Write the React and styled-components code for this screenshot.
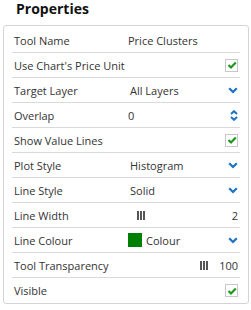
import React from 'react';
import styled, { createGlobalStyle } from 'styled-components';

const GlobalStyle = createGlobalStyle`
  body {
    margin: 0;
    background: #ffffff;
    font-family: "Open Sans", "Liberation Sans", sans-serif;
  }
`;

const rows = [
  { label: 'Tool Name', kind: 'text', value: 'Price Clusters' },
  { label: "Use Chart's Price Unit", kind: 'check' },
  { label: 'Target Layer', kind: 'select', value: 'All Layers' },
  { label: 'Overlap', kind: 'number', value: '0' },
  { label: 'Show Value Lines', kind: 'check' },
  { label: 'Plot Style', kind: 'select', value: 'Histogram' },
  { label: 'Line Style', kind: 'select', value: 'Solid' },
  { label: 'Line Width', kind: 'slider', value: '2', pos: 9 },
  { label: 'Line Colour', kind: 'colour', value: 'Colour', colour: '#008000' },
  { label: 'Tool Transparency', kind: 'slider', value: '100', pos: 72 },
  { label: 'Visible', kind: 'check', last: true },
];

function Chevron() {
  return (
    <svg width="10" height="7" viewBox="0 0 10 7">
      <polyline points="1.2,1.3 5,5 8.8,1.3" fill="none" stroke="#1f73c2" strokeWidth="2.3" />
    </svg>
  );
}

function Stepper() {
  return (
    <svg width="8" height="11" viewBox="0 0 8 11">
      <polyline points="1,4 4,1.2 7,4" fill="none" stroke="#1f73c2" strokeWidth="2" />
      <polyline points="1,7 4,9.8 7,7" fill="none" stroke="#1f73c2" strokeWidth="2" />
    </svg>
  );
}

function Check() {
  return (
    <CheckBox>
      <svg width="10" height="10" viewBox="0 0 10 10">
        <polyline points="1.5,5 4,7.5 8.8,2.5" fill="none" stroke="#1d9a1d" strokeWidth="2.2" />
      </svg>
    </CheckBox>
  );
}

function Control({ row }) {
  switch (row.kind) {
    case 'text':
      return <Value>{row.value}</Value>;
    case 'check':
      return (
        <>
          <Value />
          <Right><Check /></Right>
        </>
      );
    case 'select':
      return (
        <>
          <Value $shift>{row.value}</Value>
          <Right><Chevron /></Right>
        </>
      );
    case 'number':
      return (
        <>
          <Value>{row.value}</Value>
          <Right><Stepper /></Right>
        </>
      );
    case 'slider':
      return (
        <>
          <Track>
            <Thumb $pos={row.pos}>
              <span /><span /><span />
            </Thumb>
          </Track>
          <Right>{row.value}</Right>
        </>
      );
    case 'colour':
      return (
        <>
          <Value>
            <Swatch $colour={row.colour} />
            {row.value}
          </Value>
          <Right><Chevron /></Right>
        </>
      );
    default:
      return null;
  }
}

export default function App() {
  return (
    <>
      <GlobalStyle />
      <Title>Properties</Title>
      <Panel>
        {rows.map((row) => (
          <Row key={row.label} $last={row.last}>
            <Label>{row.label}</Label>
            <Control row={row} />
          </Row>
        ))}
      </Panel>
    </>
  );
}

const Title = styled.h2`
  margin: 0 0 7px 0;
  padding-left: 16px;
  font-size: 14px;
  line-height: 18px;
  font-weight: 700;
  color: #111;
`;

const Panel = styled.div`
  box-sizing: border-box;
  margin-left: 3px;
  width: 246px;
  height: 279px;
  padding: 2px 8px 0 8px;
  border: 1px solid #d4d4d4;
  border-radius: 3px;
`;

const Row = styled.div`
  box-sizing: border-box;
  height: 25px;
  display: grid;
  grid-template-columns: 114px 1fr auto;
  align-items: center;
  padding: 0 2px;
  border-bottom: ${(p) => (p.$last ? 'none' : '1px solid #d9d9d9')};
  font-size: 11px;
  color: #333;
`;

const Label = styled.div`
  white-space: nowrap;
`;

const Value = styled.div`
  display: flex;
  align-items: center;
  padding-left: ${(p) => (p.$shift ? '2px' : '0')};
  white-space: nowrap;
`;

const Right = styled.div`
  display: flex;
  align-items: center;
  justify-content: flex-end;
  min-width: 12px;
`;

const CheckBox = styled.div`
  box-sizing: border-box;
  width: 13px;
  height: 13px;
  border: 1px solid #c8c8c8;
  background: #fff;
  display: flex;
  align-items: center;
  justify-content: center;
`;

const Track = styled.div`
  display: flex;
  align-items: center;
  height: 100%;
`;

const Thumb = styled.div`
  margin-left: ${(p) => p.$pos}px;
  display: flex;
  gap: 1px;

  span {
    width: 2px;
    height: 9px;
    background: #555;
  }
`;

const Swatch = styled.span`
  width: 14px;
  height: 14px;
  background: ${(p) => p.$colour};
  margin-right: 4px;
`;
